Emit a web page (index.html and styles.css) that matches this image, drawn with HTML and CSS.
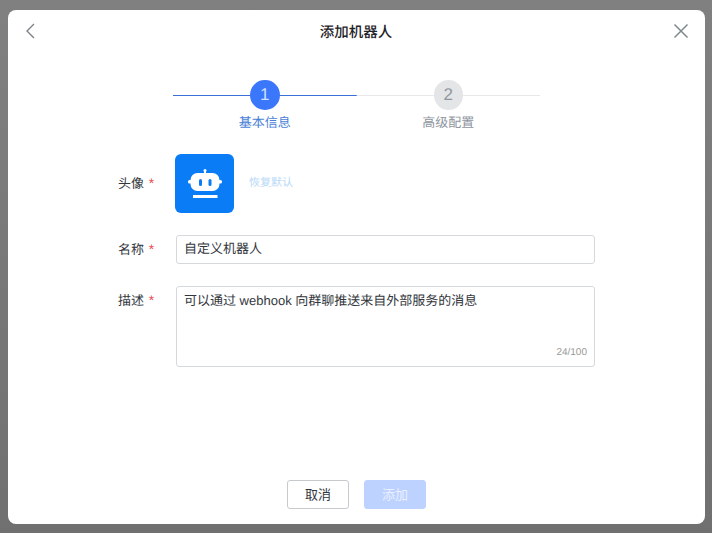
FILE: index.html
```html
<!DOCTYPE html>
<html lang="zh-CN">
<head>
    <meta charset="UTF-8">
    <title>添加机器人</title>
    <link rel="stylesheet" href="styles.css">
</head>
<body>
    <div class="modal">
        <div class="modal-header">
            <svg class="header-icon" width="16" height="16" viewBox="0 0 16 16"><path d="M11 1 L4 8 L11 15" fill="none" stroke="#7d8287" stroke-width="1.4"/></svg>
            <div class="modal-title">添加机器人</div>
            <svg class="header-icon" width="16" height="16" viewBox="0 0 16 16"><path d="M1.500 1.500 L14.500 14.500 M14.500 1.500 L1.500 14.500" fill="none" stroke="#7f8a8c" stroke-width="1.500"/></svg>
        </div>

        <div class="steps">
            <div class="step step-active">
                <div class="step-head"><span class="step-num">1</span></div>
                <div class="step-label">基本信息</div>
            </div>
            <div class="step">
                <div class="step-head"><span class="step-num">2</span></div>
                <div class="step-label">高级配置</div>
            </div>
        </div>

        <div class="form">
            <div class="form-row row-avatar">
                <label class="form-label">头像 <em>*</em></label>
                <div class="avatar">
                    <svg width="34" height="30" viewBox="0 0 34 30">
                        <rect x="16" y="1" width="2" height="4" fill="#fff"/>
                        <circle cx="17" cy="1.500" r="1.500" fill="#fff"/>
                        <rect x="2.500" y="4" width="29" height="18" rx="7" fill="#fff"/>
                        <rect x="0" y="11" width="4" height="3.500" rx="1.500" fill="#fff"/>
                        <rect x="30" y="11" width="4" height="3.500" rx="1.500" fill="#fff"/>
                        <rect x="11" y="10" width="3" height="7" rx="1.500" fill="#0a7cf5"/>
                        <rect x="20.500" y="10" width="3" height="7" rx="1.500" fill="#0a7cf5"/>
                        <rect x="5" y="26" width="24.500" height="3" fill="#fff"/>
                    </svg>
                </div>
                <a class="reset-link">恢复默认</a>
            </div>
            <div class="form-row row-name">
                <label class="form-label">名称 <em>*</em></label>
                <div class="input">自定义机器人</div>
            </div>
            <div class="form-row row-desc">
                <label class="form-label">描述 <em>*</em></label>
                <div class="textarea">
                    <div>可以通过 webhook 向群聊推送来自外部服务的消息</div>
                    <div class="counter">24/100</div>
                </div>
            </div>
        </div>

        <div class="modal-footer">
            <button class="btn">取消</button>
            <button class="btn btn-primary">添加</button>
        </div>
    </div>
</body>
</html>
```

FILE: styles.css
```css
* {
    box-sizing: border-box;
}

body {
    margin: 0;
    width: 712px;
    height: 533px;
    padding: 10px 7px 9px 8px;
    background: linear-gradient(#808080, #707070);
    font-family: "Liberation Sans", "Noto Sans CJK SC", sans-serif;
    font-size: 13px;
    color: #33373d;
    text-rendering: geometricPrecision;
    overflow: hidden;
}

.modal {
    display: flex;
    flex-direction: column;
    height: 100%;
    background: #fff;
    border-radius: 8px;
}

.modal-header {
    display: flex;
    align-items: center;
    justify-content: space-between;
    height: 44px;
    padding: 0 16px 2px 15px;
}

.header-icon {
    flex: none;
}

.modal-title {
    font-size: 14.500px;
    font-weight: 500;
    color: #1f2329;
}

.steps {
    display: flex;
    justify-content: center;
    margin-top: 26px;
}

.step {
    width: 183.500px;
    display: flex;
    flex-direction: column;
    align-items: center;
}

.step-head {
    width: 100%;
    display: flex;
    justify-content: center;
    background: linear-gradient(#e6e8ea, #e6e8ea) center / 100% 1px no-repeat;
}

.step-num {
    width: 29.500px;
    height: 30px;
    border-radius: 50%;
    background: #e3e5e7;
    color: #8f959e;
    font-size: 17px;
    line-height: 30px;
    text-align: center;
}

.step-label {
    margin-top: 3px;
    font-size: 13px;
    line-height: 20px;
    color: #8f959e;
}

.step-active .step-head {
    background-image: linear-gradient(#3a6fd8, #3a6fd8);
}

.step-active .step-num {
    background: #3b77fb;
    color: #cfe0ff;
}

.step-active .step-label {
    color: #4a7fd6;
}

.form {
    margin-top: 21px;
    padding: 0 110px;
}

.form-row {
    display: flex;
}

.form-label {
    flex: none;
    width: 58px;
}

.form-label em {
    font-style: normal;
    font-size: 14px;
    color: #e5484d;
    margin-left: 1px;
}

.row-avatar {
    align-items: center;
}

.row-avatar .form-label {
    padding-bottom: 2px;
}

.avatar {
    flex: none;
    width: 59px;
    height: 59px;
    margin-left: -1px;
    display: flex;
    align-items: center;
    justify-content: center;
    background: #0a7cf5;
    border-radius: 6px;
}

.reset-link {
    margin-left: 15px;
    margin-bottom: 4px;
    font-size: 11px;
    color: #b8d9f7;
}

.row-name {
    margin-top: 22px;
    align-items: center;
}

.row-name .form-label {
    padding-bottom: 3px;
}

.input {
    flex: 1;
    height: 29px;
    line-height: 26px;
    padding: 0 7px;
    border: 1px solid #d5d9dc;
    border-radius: 3px;
}

.row-desc {
    margin-top: 22px;
}

.row-desc .form-label {
    padding-top: 4px;
}

.textarea {
    flex: 1;
    height: 81px;
    display: flex;
    flex-direction: column;
    justify-content: space-between;
    padding: 5px 7px 7px;
    border: 1px solid #d5d9dc;
    border-radius: 3px;
    line-height: 18px;
}

.counter {
    text-align: right;
    font-size: 10px;
    line-height: 12px;
    color: #999;
}

.modal-footer {
    margin-top: auto;
    display: flex;
    justify-content: center;
    gap: 15px;
    padding-bottom: 15px;
}

.btn {
    width: 62px;
    height: 29px;
    padding: 0 0 2px;
    background: #fff;
    border: 1px solid #c6cacd;
    border-radius: 3px;
    font: inherit;
    color: #33373d;
}

.btn-primary {
    background: #bdd2ff;
    border-color: #bdd2ff;
    color: #e9f0ff;
}
```
